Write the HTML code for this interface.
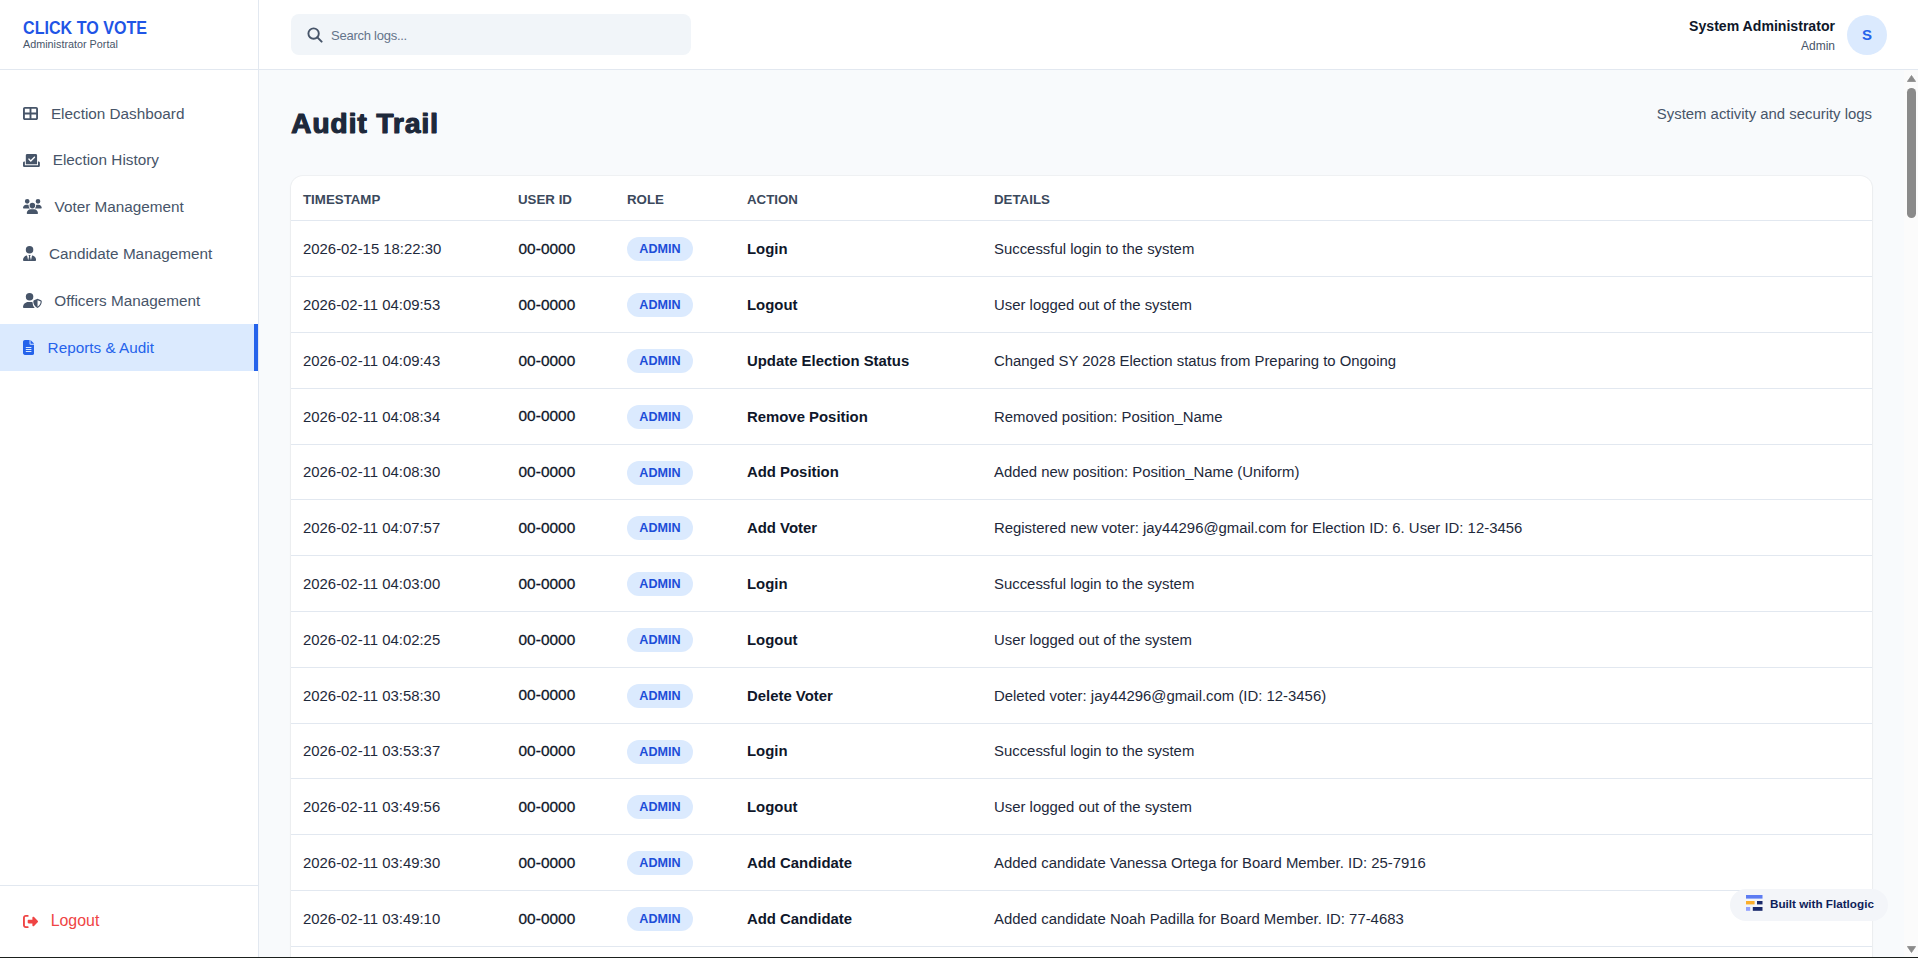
<!DOCTYPE html>
<html>
<head>
<meta charset="utf-8">
<style>
*{box-sizing:border-box;margin:0;padding:0}
html,body{width:1918px;height:958px;overflow:hidden;background:#fff}
body{font-family:"Liberation Sans",sans-serif;position:relative;color:#334155}
#side{position:absolute;left:0;top:0;width:259px;height:958px;background:#fff;border-right:1px solid #e2e8f0}
#brand{position:absolute;left:0;top:0;width:258px;height:70px;border-bottom:1px solid #e2e8f0}
#brand .t1{position:absolute;left:23px;top:17.5px;transform:scaleX(0.92);transform-origin:0 0;font-size:17.5px;font-weight:700;color:#1f55e6;white-space:nowrap;line-height:20px}
#brand .t2{position:absolute;left:23px;top:38px;font-size:10.8px;color:#475569;white-space:nowrap;line-height:12px}
.nav{position:absolute;left:0;width:258px;height:46.8px;}
.nav .ic{position:absolute;left:23px;fill:#475569}
.nav .tx{position:absolute;top:0.7px;line-height:46.8px;font-size:15.3px;color:#475569;white-space:nowrap}
.nav.act{background:#dbeafe}
.nav.act::after{content:"";position:absolute;right:0;top:0;width:4px;height:100%;background:#2563eb}
.nav.act .ic{fill:#2563eb}
.nav.act .tx{color:#2563eb}
#foot{position:absolute;left:0;top:885px;width:258px;height:73px;border-top:1px solid #e2e8f0}
#top{position:absolute;left:259px;top:0;width:1659px;height:70px;background:#fff;border-bottom:1px solid #e2e8f0}
#search{position:absolute;left:32px;top:14px;width:400px;height:41px;background:#f1f5f9;border-radius:8px}
#search .ph{position:absolute;left:40px;top:1px;line-height:41px;font-size:13px;letter-spacing:-0.25px;color:#64748b}
#user .n1{position:absolute;right:83px;top:17px;font-size:14.1px;font-weight:700;color:#0f172a;white-space:nowrap;line-height:18px}
#user .n2{position:absolute;right:83px;top:38px;font-size:12px;color:#475569;white-space:nowrap;line-height:16px}
#avatar{position:absolute;left:1588px;top:15px;width:40px;height:40px;border-radius:50%;background:#dbeafe;color:#2563eb;font-weight:700;font-size:15px;line-height:40px;text-align:center}
#main{position:absolute;left:259px;top:70px;width:1659px;height:888px;background:#f8fafc;overflow:hidden}
#title{position:absolute;left:32px;top:36px;font-size:28px;font-weight:700;color:#1e293b;line-height:36px;white-space:nowrap;-webkit-text-stroke:0.9px #1e293b;text-shadow:0.7px 0 0 #1e293b;letter-spacing:1px}
#sub{position:absolute;right:46px;top:34px;font-size:14.9px;color:#475569;line-height:20px;white-space:nowrap}
#card{position:absolute;left:32px;top:106px;width:1581px;height:1000px;background:#fff;border-radius:12px;box-shadow:0 0 0 1px rgba(15,23,42,0.035),0 1px 3px rgba(0,0,0,0.05)}
#thead{position:absolute;left:0;top:0;width:100%;height:45px;border-bottom:1px solid #e2e8f0}
.th{position:absolute;top:0.5px;line-height:45px;font-size:13.3px;font-weight:700;color:#3b495c;white-space:nowrap}
.row{position:absolute;left:0;width:100%;height:55.815px;border-bottom:1px solid #e2e8f0}
.row span{position:absolute;top:0.8px;line-height:55px;white-space:nowrap;font-size:14.9px}
.c1{left:12px;color:#1e293b}
.c2{left:227.5px;margin-top:-1.2px;letter-spacing:0.05px;color:#0f172a;-webkit-text-stroke:0.3px #0f172a;font-size:15.4px!important}
.c3{left:336px}
.c4{left:456px;font-weight:700;color:#0f172a}
.c5{left:703px;color:#1e293b}
.badge{font-style:normal;position:absolute;left:336px;top:16px;width:66px;height:24px;border-radius:12px;background:#dbeafe;color:#1d4ed8;font-size:12.6px;font-weight:700;line-height:24px;text-align:center}
#sb{position:absolute;left:1645px;top:0;width:14px;height:888px;background:#fbfbfb}
#fl{position:absolute;left:1730px;top:889px;width:158px;height:32px;border-radius:16px;background:#f3f5f9}
#fl .t{position:absolute;left:40px;top:-0.8px;line-height:32px;font-size:11.7px;font-weight:700;color:#0f1e5a;white-space:nowrap}
#bline{position:absolute;left:0;top:957px;width:1918px;height:1px;background:#1b201d}
</style>
</head>
<body>
<div id="side">
  <div class="nav" style="top:90.0px"><svg class="ic" viewBox="0 0 512 512" width="15.00" height="15" style="top:16px"><path d="M448 96V224H288V96H448zm0 192V416H288V288H448zM224 224H64V96H224V224zM64 288H224V416H64V288zM64 32C28.7 32 0 60.7 0 96V416c0 35.3 28.7 64 64 64H448c35.3 0 64-28.7 64-64V96c0-35.3-28.7-64-64-64H64z"/></svg><span class="tx" style="left:50.9px">Election Dashboard</span></div>
<div class="nav" style="top:136.8px"><svg class="ic" viewBox="0 0 576 512" width="16.88" height="15" style="top:16px"><path d="M96 80c0-26.5 21.5-48 48-48H432c26.5 0 48 21.5 48 48V384H96V80zm313 47c-9.4-9.4-24.6-9.4-33.9 0l-111 111-47-47c-9.4-9.4-24.6-9.4-33.9 0s-9.4 24.6 0 33.9l64 64c9.4 9.4 24.6 9.4 33.9 0L409 161c9.4-9.4 9.4-24.6 0-33.9zM0 336c0-26.5 21.5-48 48-48H64V416H512V288h16c26.5 0 48 21.5 48 48v96c0 26.5-21.5 48-48 48H48c-26.5 0-48-21.5-48-48V336z"/></svg><span class="tx" style="left:52.7px">Election History</span></div>
<div class="nav" style="top:183.6px"><svg class="ic" viewBox="0 0 640 512" width="18.75" height="15" style="top:15px"><path d="M144 0a80 80 0 1 1 0 160A80 80 0 1 1 144 0zM512 0a80 80 0 1 1 0 160A80 80 0 1 1 512 0zM0 298.7C0 239.8 47.8 192 106.7 192h42.7c15.9 0 31 3.5 44.6 9.7c-1.3 7.2-1.900 14.7-1.9 22.3c0 38.2 16.8 72.5 43.3 96c-.2 0-.4 0-.7 0H21.3C9.6 320 0 310.4 0 298.7zM405.3 320c-.2 0-.4 0-.7 0c26.6-23.5 43.3-57.8 43.3-96c0-7.6-.7-15-1.9-22.3c13.6-6.3 28.7-9.7 44.6-9.7h42.7C592.2 192 640 239.8 640 298.7c0 11.8-9.6 21.3-21.3 21.3H405.3zM224 224a96 96 0 1 1 192 0 96 96 0 1 1 -192 0zM128 485.3C128 411.7 187.7 352 261.3 352H378.7C452.3 352 512 411.7 512 485.3c0 14.7-11.9 26.7-26.7 26.7H154.7c-14.7 0-26.7-11.900-26.7-26.7z"/></svg><span class="tx" style="left:54.6px">Voter Management</span></div>
<div class="nav" style="top:230.4px"><svg class="ic" viewBox="0 0 448 512" width="13.12" height="15" style="top:16px"><path d="M96 128a128 128 0 1 0 256 0A128 128 0 1 0 96 128zm94.5 200.2l18.6 31L175.8 483.1l-36-146.9c-2-8.1-9.8-13.4-17.9-11.3C51.9 342.4 0 405.8 0 481.3c0 17 13.8 30.7 30.7 30.7H162.5c0 0 0 0 .1 0H168 280h5.5c0 0 0 0 .1 0H417.3c17 0 30.7-13.8 30.7-30.7c0-75.5-51.900-138.9-121.9-156.4c-8.1-2-15.9 3.3-17.9 11.3l-36 146.9L238.900 359.2l18.6-31c6.4-10.7-1.3-24.2-13.7-24.2H224 204.3c-12.4 0-20.1 13.6-13.7 24.2z"/></svg><span class="tx" style="left:48.9px">Candidate Management</span></div>
<div class="nav" style="top:277.2px"><svg class="ic" viewBox="0 0 640 512" width="18.75" height="15" style="top:16px"><circle cx="224" cy="128" r="128"/><path d="M178.3 304C79.8 304 0 383.8 0 482.3C0 498.7 13.3 512 29.7 512H400C350 470 330 400 328 318C310 308 290 304 269.7 304H178.3z"/><path fill-rule="evenodd" stroke="#fff" stroke-width="36" paint-order="stroke" d="M496 200L616 248C630 254 640 266 640 282C640 350 612 452 496 510C380 452 352 350 352 282C352 266 362 254 376 248ZM496 248V470C578 424 600 346 604 290Z"/></svg><span class="tx" style="left:54.3px">Officers Management</span></div>
<div class="nav act" style="top:324.0px"><svg class="ic" viewBox="0 0 11.25 15" width="11.25" height="15" style="top:16px"><path d="M1.9 0C0.85 0 0 0.85 0 1.9V13.1C0 14.15 0.85 15 1.9 15H9.35C10.4 15 11.25 14.15 11.25 13.1V4.7H7.5C6.98 4.7 6.56 4.27 6.56 3.75V0Z"/><path d="M7.5 0V3.75H11.25Z"/><rect x="2.8" y="7" width="5.6" height="1" fill="#dbeafe"/><rect x="2.8" y="9" width="5.6" height="1" fill="#dbeafe"/><rect x="2.8" y="11" width="5.6" height="1" fill="#dbeafe"/></svg><span class="tx" style="left:47.6px">Reports &amp; Audit</span></div>
<div id="foot"><div class="nav" style="top:12px"><svg class="ic" viewBox="0 0 512 512" width="15.00" height="15" style="top:16px;fill:#ef4444"><path d="M377.9 105.9L500.7 228.7c7.2 7.2 11.3 17.1 11.3 27.3s-4.1 20.1-11.3 27.3L377.9 406.1c-6.4 6.4-15 9.9-24 9.9c-18.7 0-33.900-15.2-33.9-33.9l0-62.1-128 0c-17.7 0-32-14.3-32-32l0-64c0-17.7 14.3-32 32-32l128 0 0-62.1c0-18.7 15.2-33.9 33.9-33.9c9 0 17.6 3.6 24 9.9zM160 96L96 96c-17.7 0-32 14.3-32 32l0 256c0 17.7 14.3 32 32 32l64 0c17.7 0 32 14.3 32 32s-14.3 32-32 32l-64 0c-53 0-96-43-96-96L0 128C0 75 43 32 96 32l64 0c17.7 0 32 14.3 32 32s-14.3 32-32 32z"/></svg><span class="tx" style="left:50.7px;color:#ef4444;font-size:15.9px;top:0.2px">Logout</span></div></div>
  <div id="brand"><div class="t1">CLICK TO VOTE</div><div class="t2">Administrator Portal</div></div>
</div>
<div id="top">
  <div id="search"><svg style="position:absolute;left:16px;top:13px" width="16" height="16" viewBox="0 0 16 16"><circle cx="6.6" cy="6.6" r="5.2" fill="none" stroke="#475569" stroke-width="1.9"/><line x1="10.4" y1="10.4" x2="14.6" y2="14.6" stroke="#475569" stroke-width="2" stroke-linecap="round"/></svg><div class="ph">Search logs...</div></div>
  <div id="user"><div class="n1">System Administrator</div><div class="n2">Admin</div></div>
  <div id="avatar">S</div>
</div>
<div id="main">
  <div id="title">Audit Trail</div>
  <div id="sub">System activity and security logs</div>
  <div id="card">
    <div id="thead">
      <span class="th" style="left:12px">TIMESTAMP</span>
      <span class="th" style="left:227px">USER ID</span>
      <span class="th" style="left:336px">ROLE</span>
      <span class="th" style="left:456px">ACTION</span>
      <span class="th" style="left:703px">DETAILS</span>
    </div>
    <div id="rows">
<div class="row" style="top:45.300px"><span class="c1">2026-02-15 18:22:30</span><span class="c2">00-0000</span><i class="badge">ADMIN</i><span class="c4">Login</span><span class="c5">Successful login to the system</span></div>
<div class="row" style="top:101.115px"><span class="c1">2026-02-11 04:09:53</span><span class="c2">00-0000</span><i class="badge">ADMIN</i><span class="c4">Logout</span><span class="c5">User logged out of the system</span></div>
<div class="row" style="top:156.930px"><span class="c1">2026-02-11 04:09:43</span><span class="c2">00-0000</span><i class="badge">ADMIN</i><span class="c4">Update Election Status</span><span class="c5">Changed SY 2028 Election status from Preparing to Ongoing</span></div>
<div class="row" style="top:212.745px"><span class="c1">2026-02-11 04:08:34</span><span class="c2">00-0000</span><i class="badge">ADMIN</i><span class="c4">Remove Position</span><span class="c5">Removed position: Position_Name</span></div>
<div class="row" style="top:268.560px"><span class="c1">2026-02-11 04:08:30</span><span class="c2">00-0000</span><i class="badge">ADMIN</i><span class="c4">Add Position</span><span class="c5">Added new position: Position_Name (Uniform)</span></div>
<div class="row" style="top:324.375px"><span class="c1">2026-02-11 04:07:57</span><span class="c2">00-0000</span><i class="badge">ADMIN</i><span class="c4">Add Voter</span><span class="c5">Registered new voter: jay44296@gmail.com for Election ID: 6. User ID: 12-3456</span></div>
<div class="row" style="top:380.190px"><span class="c1">2026-02-11 04:03:00</span><span class="c2">00-0000</span><i class="badge">ADMIN</i><span class="c4">Login</span><span class="c5">Successful login to the system</span></div>
<div class="row" style="top:436.005px"><span class="c1">2026-02-11 04:02:25</span><span class="c2">00-0000</span><i class="badge">ADMIN</i><span class="c4">Logout</span><span class="c5">User logged out of the system</span></div>
<div class="row" style="top:491.820px"><span class="c1">2026-02-11 03:58:30</span><span class="c2">00-0000</span><i class="badge">ADMIN</i><span class="c4">Delete Voter</span><span class="c5">Deleted voter: jay44296@gmail.com (ID: 12-3456)</span></div>
<div class="row" style="top:547.635px"><span class="c1">2026-02-11 03:53:37</span><span class="c2">00-0000</span><i class="badge">ADMIN</i><span class="c4">Login</span><span class="c5">Successful login to the system</span></div>
<div class="row" style="top:603.450px"><span class="c1">2026-02-11 03:49:56</span><span class="c2">00-0000</span><i class="badge">ADMIN</i><span class="c4">Logout</span><span class="c5">User logged out of the system</span></div>
<div class="row" style="top:659.265px"><span class="c1">2026-02-11 03:49:30</span><span class="c2">00-0000</span><i class="badge">ADMIN</i><span class="c4">Add Candidate</span><span class="c5">Added candidate Vanessa Ortega for Board Member. ID: 25-7916</span></div>
<div class="row" style="top:715.080px"><span class="c1">2026-02-11 03:49:10</span><span class="c2">00-0000</span><i class="badge">ADMIN</i><span class="c4">Add Candidate</span><span class="c5">Added candidate Noah Padilla for Board Member. ID: 77-4683</span></div>
<div class="row" style="top:770.895px"><span class="c1">2026-02-11 03:45:02</span><span class="c2">00-0000</span><i class="badge">ADMIN</i><span class="c4">Login</span><span class="c5">Successful login to the system</span></div>
</div>
  </div>
  <div id="sb"><svg style="position:absolute;left:3px;top:5px" width="9" height="7" viewBox="0 0 9 7"><path d="M4.5 0.5 L8.6 6.5 L0.4 6.5 Z" fill="#8a8a8a" stroke="#8a8a8a" stroke-width="0.8" stroke-linejoin="round"/></svg><div style="position:absolute;left:3px;top:18px;width:9px;height:130px;border-radius:4.5px;background:#8a8a8a"></div><svg style="position:absolute;left:3px;top:876px" width="9" height="7" viewBox="0 0 9 7"><path d="M4.5 6.5 L8.6 0.5 L0.4 0.5 Z" fill="#8a8a8a" stroke="#8a8a8a" stroke-width="0.8" stroke-linejoin="round"/></svg></div>
</div>
<div id="fl"><svg style="position:absolute;left:16px;top:6px" width="17" height="17" viewBox="0 0 17 17"><rect x="0" y="0" width="16.5" height="3.6" fill="#5d7cf2"/><rect x="0" y="6" width="8.6" height="3.4" fill="#fbae2c"/><rect x="11" y="6" width="5.5" height="3.4" fill="#1a2a6c"/><rect x="0" y="12" width="4.2" height="3.8" fill="#8fa0ff"/><rect x="6.8" y="12" width="9.7" height="3.8" fill="#1a2a6c"/></svg><div class="t">Built with Flatlogic</div></div>
<div id="bline"></div>
</body>
</html>
